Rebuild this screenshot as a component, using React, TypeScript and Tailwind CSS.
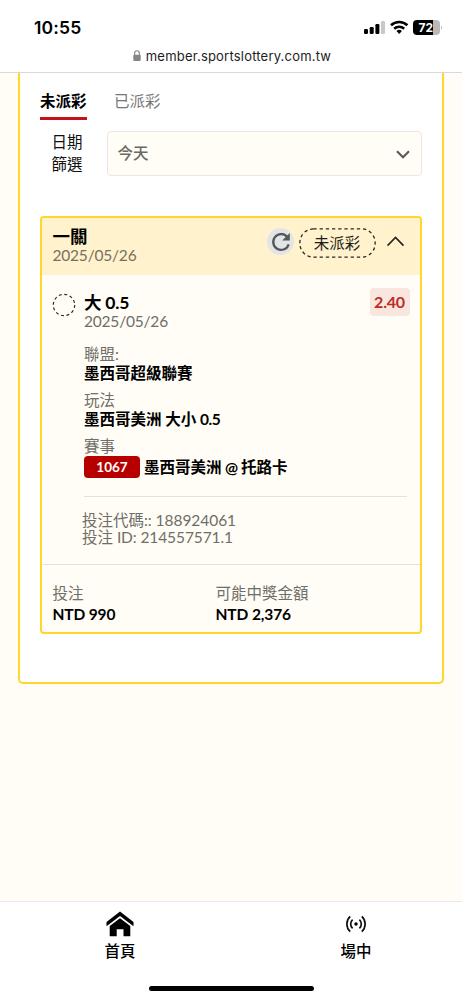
import React from "react";

const ui = "font-['Inter','Liberation_Sans',sans-serif]";

function StatusBar() {
  return (
    <div className={`flex h-[42px] items-start justify-between pl-[34px] pr-[19px] pt-[17px] ${ui}`}>
      <span className="text-[17.5px] font-semibold leading-[22px] tracking-[0.2px] text-black">10:55</span>
      <svg width="79" height="16" viewBox="0 0 79 16" className="mt-[2px]">
        <rect x="0" y="10" width="4" height="5" rx="1.2" />
        <rect x="5.7" y="8" width="4" height="7" rx="1.2" />
        <rect x="11.4" y="5" width="4" height="10" rx="1.2" />
        <rect x="17" y="2" width="4" height="13" rx="1.2" fill="#c8c8c8" />
        <g fill="none" stroke="#000" strokeWidth="2.6">
          <path d="M27 6.2a12 12 0 0 1 16.400 0" />
          <path d="M30.200 9.700a7.400 7.400 0 0 1 10 0" />
        </g>
        <path d="M35.200 15l-2.700-2.900a4 4 0 0 1 5.400 0z" />
        <path d="M53 1H69V16H53a4 4 0 0 1-4-4V5a4 4 0 0 1 4-4z" />
        <path d="M69 1h3a4 4 0 0 1 4 4v7a4 4 0 0 1-4 4h-3z" fill="#b9b9b9" />
        <path d="M77 6.500c1.500.5 1.500 3.500 0 4z" fill="#b9b9b9" />
        <text x="54.500" y="12.800" fontSize="12" fontWeight="700" fill="#fff">72</text>
      </svg>
    </div>
  );
}

function AddressBar() {
  return (
    <div className={`flex h-[30px] items-start justify-center pl-[2px] pt-[4px] ${ui}`}>
      <svg width="8" height="12" viewBox="0 0 8 12" className="mr-[5px] mt-[4px]">
        <rect x="0.300" y="4.800" width="7.400" height="6.200" rx="1" fill="#858588" />
        <path d="M1.700 5V3a2.300 2.300 0 0 1 4.600 0v2" fill="none" stroke="#858588" strokeWidth="1.100" />
      </svg>
      <span className="text-[13px] leading-[20px] tracking-[0.2px] text-[#1c1c1e]">member.sportslottery.com.tw</span>
    </div>
  );
}

function Field({ label, children, className = "" }: { label: string; children: React.ReactNode; className?: string }) {
  return (
    <div className={className}>
      <div className="h-[19px] leading-[19px] text-[#6f6e69]">{label}</div>
      <div className="font-bold leading-[19px] text-black">{children}</div>
    </div>
  );
}

function BetCard() {
  return (
    <section className="mt-[40px] h-[418px] overflow-hidden rounded-[4px] border-2 border-[#ffd62b] bg-[#fffdf5]">
      <header className="flex h-[57px] bg-[#fff2cc] pl-[10.5px] pr-[15px]">
        <div className="pt-[9px]">
          <div className="text-[17.5px] font-bold leading-[19px] text-black">一關</div>
          <div className="leading-[19px] tracking-[-0.2px] text-[#77705f]">2025/05/26</div>
        </div>
        <div className="ml-auto flex items-start pt-[10px]">
          <div className="flex size-[27px] items-center justify-center rounded-full bg-[#e3e4e6]">
            <svg width="20" height="20" viewBox="0 0 20 20">
              <path d="M16 4.600A7.900 7.900 0 1 0 17.700 12.300" fill="none" stroke="#555759" strokeWidth="2.300" />
              <path d="M18.800 1v7.600h-7.600z" fill="#555759" />
            </svg>
          </div>
          <div className="relative ml-[5px] flex h-[30px] w-[77px] items-center justify-center text-[#1f1d18]">
            <svg width="77" height="30" className="absolute inset-0">
              <rect x="0.900" y="0.900" width="75.200" height="28.200" rx="13.500" fill="none" stroke="#2a2823" strokeWidth="1.300" strokeDasharray="3.300 2.900" />
            </svg>
            <span className="-ml-[1px] leading-[20px]">未派彩</span>
          </div>
          <svg width="18" height="11" viewBox="0 0 18 11" className="ml-[11px] mt-[8px]">
            <path d="M0.500 9.600L8.500 1.500l8 8.100" fill="none" stroke="#25231d" strokeWidth="1.600" />
          </svg>
        </div>
      </header>

      <div className="flex h-[289px] pl-[9.5px] pr-[10.5px] pt-[18px]">
        <svg width="24" height="24" viewBox="0 0 24 24" className="shrink-0">
          <circle cx="12" cy="12" r="10.700" fill="none" stroke="#2a2823" strokeWidth="1.200" strokeDasharray="3 2.600" />
        </svg>
        <div className="ml-[8.5px] flex-1">
          <div className="flex">
            <div>
              <div className="text-[17.5px] font-bold leading-[19px] tracking-[-0.2px] text-black">大 0.5</div>
              <div className="leading-[19px] tracking-[-0.2px] text-[#6f6e69]">2025/05/26</div>
            </div>
            <div className="-mt-[5px] ml-auto flex h-[28px] w-[40px] items-center justify-center rounded-[4px] bg-[#f8e6df] text-[16px] font-bold tracking-[-0.2px] text-[#bd2b25]">
              2.40
            </div>
          </div>
          <Field label="聯盟:" className="mt-[14px]">墨西哥超級聯賽</Field>
          <Field label="玩法" className="mt-[8px]">
            墨西哥美洲 大小 <span className="tracking-[-0.5px]">0.5</span>
          </Field>
          <Field label="賽事" className="mt-[8px]">
            <div className="flex h-[22px] items-center">
              <span className="mr-[4px] flex h-[22px] w-[56px] items-center justify-center rounded-[4px] bg-[#b60000] text-[13.5px] text-white">
                1067
              </span>
              <span>
                墨西哥美洲<span className="tracking-[-0.4px]"> @ </span>托路卡
              </span>
            </div>
          </Field>
          <div className="mr-[3px] mt-[18px] border-t border-[#e4e2dc]" />
          <div className="-ml-[2px] mt-[15px] leading-[17px] text-[#6f6e69]">
            <div>
              投注代碼<span className="tracking-[-0.05px]">:: 188924061</span>
            </div>
            <div>
              投注<span className="tracking-[-0.1px]"> ID: 214557571.1</span>
            </div>
          </div>
        </div>
      </div>

      <footer className="flex border-t border-[#e4e2dc] pl-[10.5px] pt-[19px]">
        <Field label="投注" className="w-[163px]">
          <div className="pt-[2px] tracking-[-0.15px]">NTD 990</div>
        </Field>
        <Field label="可能中獎金額">
          <div className="pt-[2px] tracking-[-0.1px]">NTD 2,376</div>
        </Field>
      </footer>
    </section>
  );
}

function BottomNav() {
  return (
    <nav className="flex h-[99px] flex-col border-t border-[#e8e8e8] bg-white">
      <div className="flex justify-between pl-[104px] pr-[90px] pt-[9px] text-[15.5px] font-medium text-black">
        <a className="flex w-[32px] flex-col items-center">
          <svg width="28" height="26" viewBox="0 0 28 26">
            <path d="M14 0.500L27.500 11v4.200L14 4.900 0.500 15.200V11z" />
            <path d="M14 7.300L24.300 15v10.300h-6.800v-7h-6.800v7H3.700V15z" />
          </svg>
          <span className="mt-[4px] whitespace-nowrap leading-[20px]">首頁</span>
        </a>
        <a className="flex w-[32px] flex-col items-center">
          <svg width="22" height="18" viewBox="0 0 22 18" className="mt-[4px]">
            <circle cx="11" cy="9" r="1.700" />
            <g fill="none" stroke="#111" strokeWidth="1.700">
              <path d="M7.600 4.600a6 6 0 0 0 0 8.800M14.400 4.600a6 6 0 0 1 0 8.800" />
              <path d="M5.200 1.300a10.600 10.600 0 0 0 0 15.400M16.800 1.300a10.600 10.600 0 0 1 0 15.400" />
            </g>
          </svg>
          <span className="mt-[8px] whitespace-nowrap leading-[20px]">場中</span>
        </a>
      </div>
      <div className="mb-[9px] ml-[148.5px] mt-auto h-[5px] w-[165px] rounded-full bg-black" />
    </nav>
  );
}

export default function App() {
  return (
    <div className="flex h-[1000px] w-[462px] flex-col overflow-hidden bg-[#fffdf5] font-['Lato','Noto_Sans_CJK_TC',sans-serif] text-[15.5px]">
      <div className="h-[73px] shrink-0 border-b border-[#d9d9d9] bg-white">
        <StatusBar />
        <AddressBar />
      </div>

      <main className="flex-1 pl-[18px] pr-[18px]">
        <div className="h-[611px] rounded-b-[5px] border-2 border-t-0 border-[#ffd62b] bg-white px-[20px] pt-[18px]">
          <div className="flex gap-[27.5px]">
            <div className="h-[29px] border-b-[3px] border-[#c4121a] font-bold leading-[20px] text-black">未派彩</div>
            <div className="leading-[20px] text-[#77777a]">已派彩</div>
          </div>
          <div className="mt-[11px] flex">
            <div className="w-[54px] text-center leading-[22px] text-[#111]">
              日期
              <br />
              篩選
            </div>
            <div className="ml-[13px] flex h-[45px] flex-1 items-center justify-between rounded-[4px] border border-[#e9e7e0] bg-[#fffdf5] pl-[9.5px] pr-[11px] font-medium text-[#6a6965]">
              <span>今天</span>
              <svg width="14" height="9" viewBox="0 0 14 9" className="mt-[2px]">
                <path d="M1 1.200l6 6 6-6" fill="none" stroke="#5b5b5b" strokeWidth="2.200" />
              </svg>
            </div>
          </div>
          <BetCard />
        </div>
      </main>

      <BottomNav />
    </div>
  );
}
